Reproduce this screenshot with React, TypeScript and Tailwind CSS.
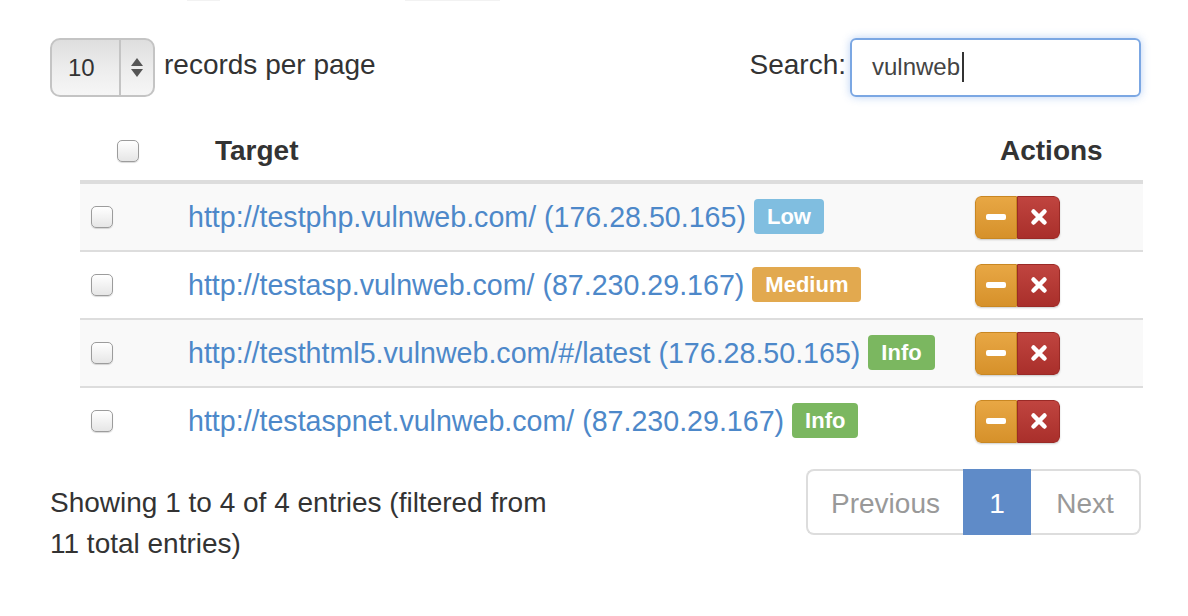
import React from "react";

type Row = { url: string; ip: string; level: "Low" | "Medium" | "Info" };

const rows: Row[] = [
  { url: "http://testphp.vulnweb.com/", ip: "(176.28.50.165)", level: "Low" },
  { url: "http://testasp.vulnweb.com/", ip: "(87.230.29.167)", level: "Medium" },
  { url: "http://testhtml5.vulnweb.com/#/latest", ip: "(176.28.50.165)", level: "Info" },
  { url: "http://testaspnet.vulnweb.com/", ip: "(87.230.29.167)", level: "Info" },
];

const badgeColor = {
  Low: "bg-[#80bee0]",
  Medium: "bg-[#e2a94f]",
  Info: "bg-[#7bb760]",
};

const CheckBox = () => (
  <div className="w-[22px] h-[22px] rounded-[5px] border border-[#9c9c9c] bg-gradient-to-b from-white to-[#e6e6e6] shadow-[0_1px_1px_rgba(0,0,0,0.15)]" />
);

const Actions = () => (
  <div className="flex h-[43px] w-[85px] rounded-[6px] shadow-[0_1px_2px_rgba(0,0,0,0.2)] overflow-hidden">
    <div className="w-[42px] h-full flex items-center justify-center bg-gradient-to-b from-[#e8a744] to-[#d6912a] border border-[#c98722] rounded-l-[6px]">
      <div className="w-[20px] h-[6px] rounded-[2px] bg-white" />
    </div>
    <div className="w-[43px] h-full flex items-center justify-center bg-gradient-to-b from-[#c0443f] to-[#a92f2b] border border-[#9a2a26] rounded-r-[6px]">
      <svg width="18" height="18" viewBox="0 0 18 18">
        <path d="M3.5 3.5 L14.5 14.5 M14.5 3.5 L3.5 14.5" stroke="white" strokeWidth="4.5" strokeLinecap="round" />
      </svg>
    </div>
  </div>
);

export default function App() {
  return (
    <div className="w-[1188px] h-[616px] bg-white overflow-hidden text-[#333] font-['Liberation_Sans',Arial,sans-serif]">
      <div className="flex h-[2px]">
        <div className="ml-[187px] w-[33px] h-[1px] bg-[#f2f2f2]" />
        <div className="ml-[185px] w-[95px] h-[1px] bg-[#f2f2f2]" />
      </div>

      {/* length + search */}
      <div className="mt-[36px] pl-[50px] pr-[47px] flex justify-between items-center h-[59px]">
        <div className="flex items-center">
          <div className="flex w-[105px] h-[59px] rounded-[10px] border-2 border-[#c4c4c4] bg-gradient-to-b from-[#dedede] via-[#ececec] to-[#f6f6f6]">
            <div className="w-[67px] flex items-center pl-[16px] text-[24px] text-[#333]">10</div>
            <div className="w-[2px] bg-[#c4c4c4]" />
            <div className="flex-1 flex flex-col items-center justify-center gap-[3px]">
              <svg width="12" height="8" viewBox="0 0 12 8"><path d="M6 0 L12 8 L0 8 Z" fill="#555" /></svg>
              <svg width="12" height="8" viewBox="0 0 12 8"><path d="M0 0 L12 0 L6 8 Z" fill="#555" /></svg>
            </div>
          </div>
          <span className="ml-[9px] text-[28px] leading-[40px] pb-[5px]">records per page</span>
        </div>
        <div className="flex items-center">
          <span className="text-[28px] leading-[40px] pb-[5px] pr-[2px]">Search:</span>
          <div className="ml-[2px] w-[291px] h-[59px] rounded-[6px] border-2 border-[#7ba7e3] shadow-[0_0_8px_rgba(102,155,230,0.45)] flex items-center pl-[20px] pb-[2px] text-[24px] text-[#444]">
            vulnweb
            <span className="ml-[2px] w-[2px] h-[30px] bg-[#333]" />
          </div>
        </div>
      </div>

      {/* table */}
      <div className="mt-[24px] ml-[80px] w-[1063px]">
        <div className="flex items-center h-[59px] border-b-4 border-[#ddd] box-content font-bold text-[28px]">
          <div className="w-[135px] pl-[37px]">
            <CheckBox />
          </div>
          <div className="flex-1">Target</div>
          <div className="w-[143px]">Actions</div>
        </div>
        {rows.map((r, i) => (
          <div
            key={i}
            className={`flex items-center h-[66px] box-content ${i > 0 ? "border-t-2 border-[#ddd]" : ""} ${i % 2 === 0 ? "bg-[#f9f9f9]" : "bg-white"}`}
          >
            <div className="w-[108px] pl-[11px]">
              <CheckBox />
            </div>
            <div className="flex-1 flex items-center text-[28.6px] text-[#4d88c9]">
              <span>
                {r.url} {r.ip}
              </span>
              <span
                className={`ml-[8px] h-[35px] px-[13px] flex items-center rounded-[4px] text-white font-bold text-[22px] ${badgeColor[r.level]}`}
              >
                {r.level}
              </span>
            </div>
            <div className="w-[168px]">
              <Actions />
            </div>
          </div>
        ))}
      </div>

      {/* info + paging */}
      <div className="pl-[50px] pr-[47px] flex justify-between items-start">
        <div className="mt-[28px] text-[28px] leading-[41px]">
          Showing 1 to 4 of 4 entries (filtered from
          <br />
          11 total entries)
        </div>
        <div className="mt-[15px] flex h-[66px] text-[28px]">
          <div className="w-[157px] flex items-center justify-center pt-[3px] border-2 border-r-0 border-[#ddd] rounded-l-[8px] text-[#999]">
            Previous
          </div>
          <div className="w-[68px] flex items-center justify-center pt-[3px] bg-[#5f8bc8] text-white">1</div>
          <div className="w-[110px] flex items-center justify-center pt-[3px] border-2 border-l-0 border-[#ddd] rounded-r-[8px] text-[#999]">
            Next
          </div>
        </div>
      </div>
    </div>
  );
}
